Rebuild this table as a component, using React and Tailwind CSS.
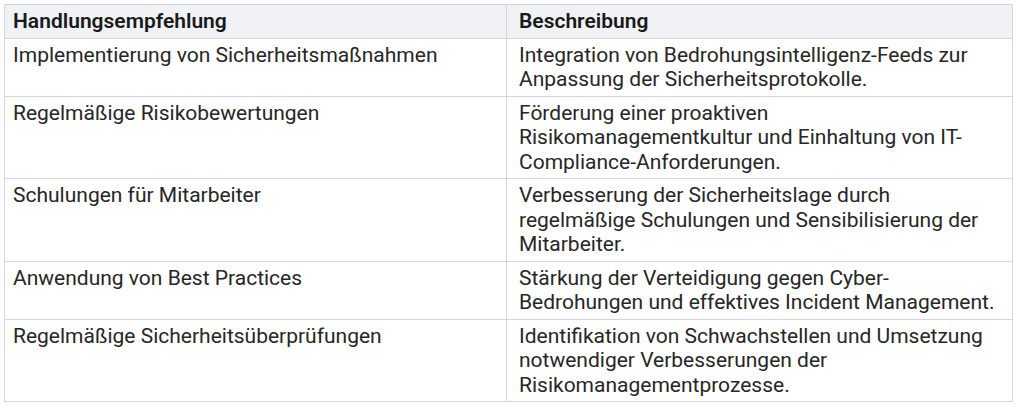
const rows = [
  ['Implementierung von Sicherheitsmaßnahmen', 'Integration von Bedrohungsintelligenz-Feeds zur Anpassung der Sicherheitsprotokolle.'],
  ['Regelmäßige Risikobewertungen', 'Förderung einer proaktiven Risikomanagementkultur und Einhaltung von IT-Compliance-Anforderungen.'],
  ['Schulungen für Mitarbeiter', 'Verbesserung der Sicherheitslage durch regelmäßige Schulungen und Sensibilisierung der Mitarbeiter.'],
  ['Anwendung von Best Practices', 'Stärkung der Verteidigung gegen Cyber-Bedrohungen und effektives Incident Management.'],
  ['Regelmäßige Sicherheitsüberprüfungen', 'Identifikation von Schwachstellen und Umsetzung notwendiger Verbesserungen der Risikomanagementprozesse.'],
]

export default function App() {
  return (
    <div className="min-h-[405px] bg-white p-1 font-['Roboto',sans-serif] text-[21px] leading-[24.5px] text-[#262626]">
      <table className="w-[1009px] table-fixed border-collapse border border-[#d3d7dd]">
        <thead>
          <tr className="bg-[#f0f2f5]">
            <th className="w-[502px] border border-[#d3d7dd] px-2 py-1 text-left font-semibold text-[#1a1a1a]">Handlungsempfehlung</th>
            <th className="border border-[#d3d7dd] px-3 py-1 text-left font-semibold text-[#1a1a1a]">Beschreibung</th>
          </tr>
        </thead>
        <tbody>
          {rows.map(([action, desc]) => (
            <tr key={action}>
              <td className="border border-[#d3d7dd] px-2 py-1 align-top">{action}</td>
              <td className="border border-[#d3d7dd] px-3 py-1 align-top">{desc}</td>
            </tr>
          ))}
        </tbody>
      </table>
    </div>
  )
}
